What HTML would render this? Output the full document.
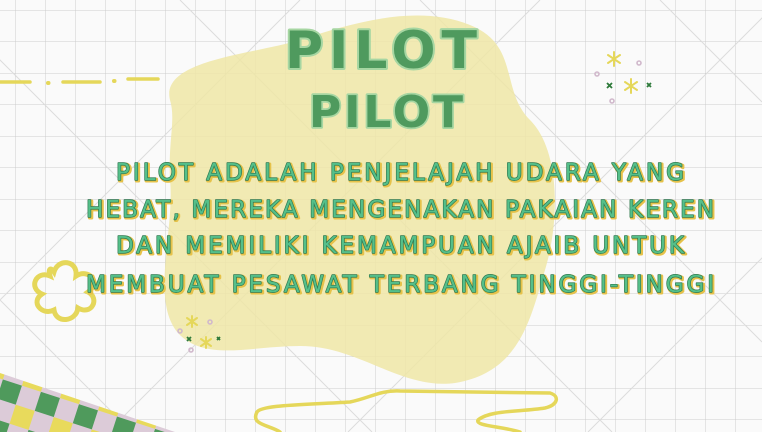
<!DOCTYPE html>
<html><head><meta charset="utf-8"><style>
html,body{margin:0;padding:0}
body{width:762px;height:432px;overflow:hidden;position:relative;background:#fafafa;font-family:"DejaVu Sans","Liberation Sans",sans-serif}
svg{position:absolute;left:0;top:0}
</style></head><body>
<svg width="762" height="432" viewBox="0 0 762 432">
<defs>
<pattern id="grid" x="15" y="10" width="30" height="31.5" patternUnits="userSpaceOnUse">
<path d="M0 0V31.5M0 0H30" stroke="#cdcdcd" stroke-width="1" fill="none"/>
</pattern>
<pattern id="chk" width="40" height="40" patternUnits="userSpaceOnUse" patternTransform="rotate(18)">
<rect width="40" height="40" fill="#dccbd8"/>
<rect x="0" y="0" width="20" height="20" fill="#4f9a5c"/>
<rect x="20" y="20" width="20" height="20" fill="#e8da5c"/>
</pattern>
<clipPath id="band"><polygon points="0,373 175,432 0,432"/></clipPath>
</defs>
<rect width="762" height="432" fill="url(#grid)"/>
<g stroke="#dcdcdc" stroke-width="1" fill="none">
<path d="M-60 0L372 432M180 0L612 432M420 0L762 342M660 0L762 102M-60 240L132 432"/>
<path d="M300 0L-132 432M540 0L108 432M780 0L348 432M1020 0L588 432"/>
</g>
<path d="M170 100 C160 60 250 55 300 40 C360 20 420 5 470 25 C520 45 500 90 530 120 C560 150 560 220 545 270 C530 320 520 372 455 383 C400 390 360 346 300 346 C250 346 205 362 178 333 C150 300 175 230 170 180 C168 140 176 120 170 100 Z" fill="#eee6a6" opacity="0.85"/>
<g stroke="#e5d75a" stroke-width="3.5" stroke-linecap="round" fill="none">
<path d="M0 82H30M63 82H100M128 79H158"/>
<path d="M48 83h0.5M114 81h0.5" stroke-width="4"/>
<path d="M280 432C270 425 250 425 257 412C262 405 300 405 350 402C370 398 380 390 400 391L550 393C560 396 558 405 545 408C520 412 490 410 478 420C475 426 500 426 520 432"/>
<path d="M54 272c4-14 24-12 22 4c12-8 26 6 12 16c12 6 4 24-10 16c-2 14-22 16-24 2c-12 6-24-8-12-16c-14-6-6-24 8-18c-2-6 0-10 4-4z" stroke-width="5"/>
</g>
<g clip-path="url(#band)"><rect x="0" y="360" width="200" height="80" fill="url(#chk)"/></g>
<g stroke="#e5d75a" stroke-width="2" stroke-linecap="round">
<path d="M614 52v14M608 55l12 8M620 55l-12 8M631 79v14M625 82l12 8M637 82l-12 8"/>
<path d="M192 316v11M187 318l10 7M197 318l-10 7M206 337v11M201 339l10 7M211 339l-10 7"/>
</g>
<g stroke="#2e7a3a" stroke-width="1.8">
<path d="M607 83l5 5M612 83l-5 5M647 83l4 4M651 83l-4 4M187 337l4 4M191 337l-4 4M217 337l3 3M220 337l-3 3"/>
</g>
<g fill="none" stroke="#d1b9cc" stroke-width="1.6">
<circle cx="597" cy="74" r="2"/><circle cx="639" cy="63" r="2"/><circle cx="612" cy="101" r="2"/>
<circle cx="180" cy="331" r="2"/><circle cx="210" cy="322" r="2"/><circle cx="191" cy="350" r="2"/>
</g>
<g font-family="DejaVu Sans, sans-serif" font-weight="bold" stroke-linejoin="round">
<text x="285" y="68" font-size="52" textLength="192" lengthAdjust="spacing" fill="#4f9a5e" stroke="#a6d6a2" stroke-width="4" paint-order="stroke">PILOT</text>
<text x="309" y="127" font-size="44" textLength="154" lengthAdjust="spacing" fill="#4f9a5e" stroke="#a6d6a2" stroke-width="3.5" paint-order="stroke">PILOT</text>
</g>
<g font-family="DejaVu Sans, sans-serif" font-size="23" stroke-linejoin="round">
<g fill="none" stroke="#e6c24a" stroke-width="3" transform="translate(1.2,1.2)">
<text x="116" y="180" textLength="568" lengthAdjust="spacing">PILOT ADALAH PENJELAJAH UDARA YANG</text>
<text x="86" y="217" textLength="628" lengthAdjust="spacing">HEBAT, MEREKA MENGENAKAN PAKAIAN KEREN</text>
<text x="116" y="253" textLength="568" lengthAdjust="spacing">DAN MEMILIKI KEMAMPUAN AJAIB UNTUK</text>
<text x="86" y="292" textLength="628" lengthAdjust="spacing">MEMBUAT PESAWAT TERBANG TINGGI-TINGGI</text>
</g>
<g fill="#55c08a" stroke="#2f7a52" stroke-width="1.4" paint-order="stroke">
<text x="116" y="180" textLength="568" lengthAdjust="spacing">PILOT ADALAH PENJELAJAH UDARA YANG</text>
<text x="86" y="217" textLength="628" lengthAdjust="spacing">HEBAT, MEREKA MENGENAKAN PAKAIAN KEREN</text>
<text x="116" y="253" textLength="568" lengthAdjust="spacing">DAN MEMILIKI KEMAMPUAN AJAIB UNTUK</text>
<text x="86" y="292" textLength="628" lengthAdjust="spacing">MEMBUAT PESAWAT TERBANG TINGGI-TINGGI</text>
</g>
</g>
</svg>
</body></html>
